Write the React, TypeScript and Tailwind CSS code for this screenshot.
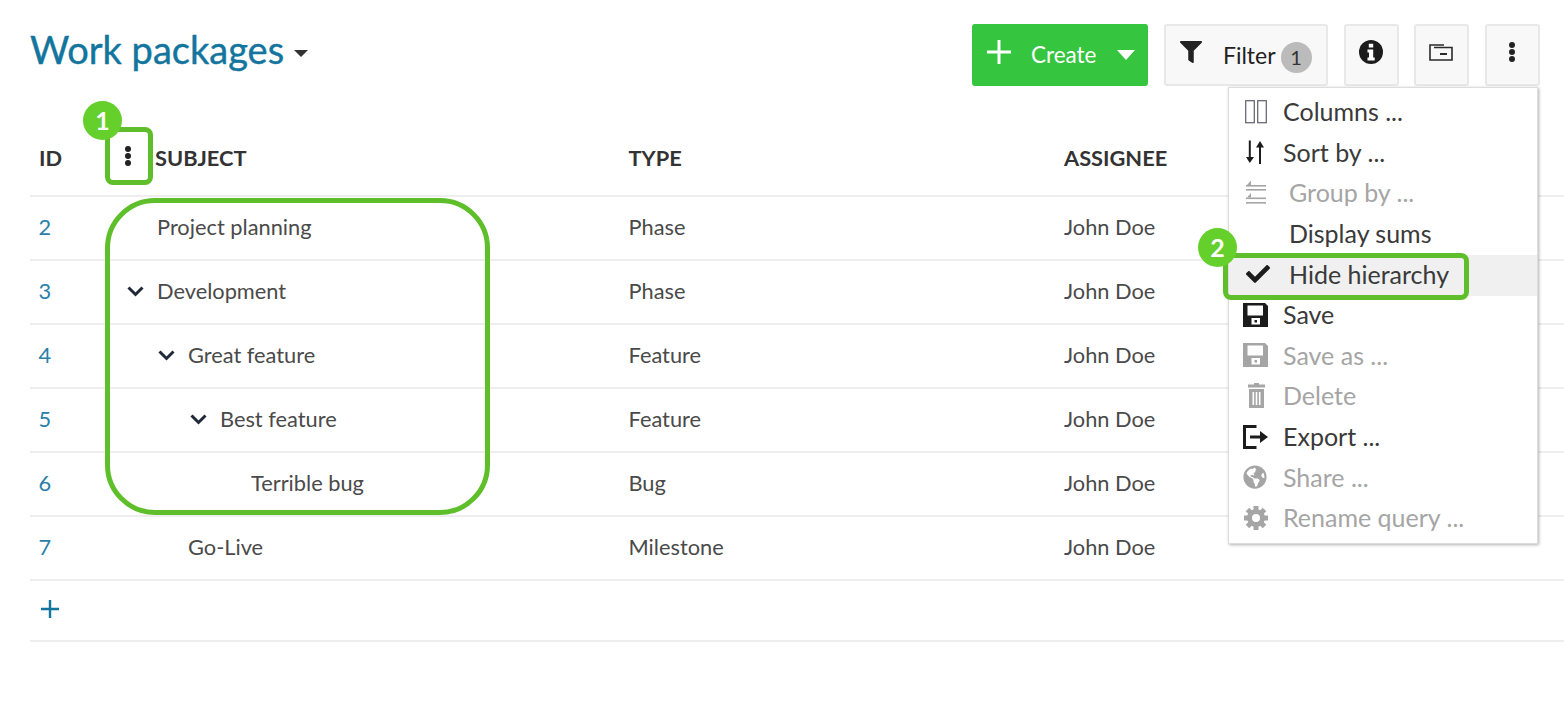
import React from 'react';
import { FaCheck, FaFilter, FaGlobeAmericas } from 'react-icons/fa';

const ColumnsIcon = () => (
  <svg width="22" height="24" viewBox="0 0 22 24" fill="none" stroke="#6b6b78" strokeWidth="1.3">
    <rect x="0.7" y="0.7" width="8.6" height="22" />
    <rect x="12.7" y="0.7" width="8.6" height="22" />
  </svg>
);

const SortIcon = () => (
  <svg width="22" height="24" viewBox="0 0 22 24" fill="currentColor">
    <rect x="3.8" y="0.5" width="2" height="18" />
    <path d="M1 17h8L4.8 23z" />
    <rect x="14" y="6" width="2" height="18" />
    <path d="M11 7.5h8L15 1z" />
  </svg>
);

const GroupIcon = () => (
  <svg width="22" height="25" viewBox="0 0 22 25" fill="currentColor">
    <path d="M6 0.5v4.5H2z" />
    <rect x="1" y="5" width="20" height="1.6" />
    <rect x="1" y="9" width="20" height="1.6" />
    <path d="M6 13v4.5H2z" />
    <rect x="1" y="17.5" width="20" height="1.6" />
    <rect x="1" y="22" width="20" height="1.6" />
  </svg>
);

const SaveIcon = () => (
  <svg width="25" height="24" viewBox="0 0 25 24" className="-ml-[2px]" fill="currentColor">
    <path
      fillRule="evenodd"
      d="M0 0h22l3 3v21H0zM4.500 2.500v10h15.500v-10zM8.500 15v6.500h8.500V15zM11.500 17h2.500v2.500h-2.500z"
    />
  </svg>
);

const TrashIcon = () => (
  <svg width="17" height="25" viewBox="0 0 17 25" className="ml-[3px]" fill="currentColor">
    <path d="M6 0h5v1.500h6v3H0v-3h6z" />
    <path fillRule="evenodd" d="M1 6h15v19H1zM4.500 9v13h1.600V9zM7.700 9v13h1.600V9zM10.900 9v13h1.600V9z" />
  </svg>
);

const ExportIcon = () => (
  <svg width="25" height="24" viewBox="0 0 25 24" className="-ml-[2px]" fill="none" stroke="currentColor">
    <path d="M13.500 1.500H1.500v21h12" strokeWidth="3" />
    <path d="M7 12h11" strokeWidth="3" />
    <path d="M17 6l8 6-8 6z" fill="currentColor" strokeWidth="0" />
  </svg>
);

const GearIcon = () => (
  <svg width="24" height="24" viewBox="0 0 24 24" className="-ml-[1px]" fill="currentColor">
    <circle cx="12" cy="12" r="6.500" fill="none" stroke="currentColor" strokeWidth="5" />
    {[0, 45, 90, 135, 180, 225, 270, 315].map((angle) => (
      <rect key={angle} x="9.500" y="0" width="5" height="6" transform={`rotate(${angle} 12 12)`} />
    ))}
  </svg>
);

const InfoIcon = () => (
  <svg width="24" height="24" viewBox="0 0 24 24">
    <circle cx="12" cy="12" r="12" fill="#1c1c1c" />
    <path d="M9.800 3.800h4.400v3.600H9.800zM8.500 9.500h5.700v8h1.500v3H8.500v-3H10v-5H8.500z" fill="#fff" />
  </svg>
);

const FolderIcon = () => (
  <svg width="24" height="17" viewBox="0 0 24 17" fill="none" stroke="#2a2a2a" strokeWidth="1.600">
    <path d="M15 1H1v15h22V3.500H5" />
    <path d="M11 10h7" strokeWidth="2" />
  </svg>
);

const Chevron = () => (
  <svg width="17" height="11" viewBox="0 0 17 11" fill="none" stroke="#1f2937" strokeWidth="3">
    <path d="M1.500 1.500 8.500 8.500 15.500 1.500" />
  </svg>
);

const Dots = () => (
  <span className="flex flex-col items-center gap-[1px]">
    <span className="w-[6px] h-[6px] rounded-full bg-[#222]" />
    <span className="w-[6px] h-[6px] rounded-full bg-[#222]" />
    <span className="w-[6px] h-[6px] rounded-full bg-[#222]" />
  </span>
);

const rows = [
  { id: 2, subject: 'Project planning', type: 'Phase', pad: 'pl-[32px]', toggle: false },
  { id: 3, subject: 'Development', type: 'Phase', pad: 'pl-0', toggle: true },
  { id: 4, subject: 'Great feature', type: 'Feature', pad: 'pl-[31px]', toggle: true },
  { id: 5, subject: 'Best feature', type: 'Feature', pad: 'pl-[63px]', toggle: true },
  { id: 6, subject: 'Terrible bug', type: 'Bug', pad: 'pl-[126px]', toggle: false },
  { id: 7, subject: 'Go-Live', type: 'Milestone', pad: 'pl-[63px]', toggle: false },
];

const menuItems = [
  { label: 'Columns ...', icon: <ColumnsIcon />, off: false, gap: 'w-[38px]' },
  { label: 'Sort by ...', icon: <SortIcon />, off: false, gap: 'w-[38px]' },
  { label: 'Group by ...', icon: <GroupIcon />, off: true, gap: 'w-[44px]' },
  { label: 'Display sums', icon: null, off: false, gap: 'w-[44px]' },
  { label: 'Hide hierarchy', icon: <FaCheck size={24} className="ml-[1px] mb-[1px]" />, off: false, gap: 'w-[44px]', active: true },
  { label: 'Save', icon: <SaveIcon />, off: false, gap: 'w-[38px]' },
  { label: 'Save as ...', icon: <SaveIcon />, off: true, gap: 'w-[38px]' },
  { label: 'Delete', icon: <TrashIcon />, off: true, gap: 'w-[38px]' },
  { label: 'Export ...', icon: <ExportIcon />, off: false, gap: 'w-[38px]' },
  { label: 'Share ...', icon: <FaGlobeAmericas size={24} className="-ml-[2px]" />, off: true, gap: 'w-[38px]' },
  { label: 'Rename query ...', icon: <GearIcon />, off: true, gap: 'w-[38px]' },
];

const ToolButton: React.FC<{ children: React.ReactNode; className?: string }> = ({ children, className }) => (
  <button className={`h-[62px] flex items-center justify-center bg-[#f8f8f8] border-2 border-[#e8e8e8] rounded-[3px] text-[#222] ${className ?? ''}`}>
    {children}
  </button>
);

const Badge: React.FC<{ n: number; className: string }> = ({ n, className }) => (
  <span className={`absolute w-[39px] h-[39px] rounded-full bg-[#65cf2c] text-white font-bold text-[25px] flex items-center justify-center ${className}`}>
    {n}
  </span>
);

export default function App() {
  return (
    <div className="relative w-[1564px] h-[719px] overflow-hidden bg-white font-['Lato',sans-serif] text-[#4a4a4a]">
      {/* Toolbar */}
      <div className="flex items-start justify-between pl-[30px] pr-[24px] pt-[24px] h-[120px]">
        <h1 className="flex items-center gap-[10px] h-[50px] text-[38px] leading-none font-normal text-[#13759e] [-webkit-text-stroke:0.4px_#13759e]">
          Work packages
          <span className="mt-[8px] w-0 h-0 border-x-[7.500px] border-x-transparent border-t-[7px] border-t-[#333]" />
        </h1>
        <div className="flex gap-[15.750px]">
          <button className="w-[176px] h-[62px] flex items-center pl-[13px] bg-[#35c53f] rounded-[3px] text-white text-[22.500px]">
            <svg width="28" height="28" viewBox="0 0 28 28" stroke="currentColor" strokeWidth="3" className="mb-[6px]">
              <path d="M14 2v24M2 14h24" />
            </svg>
            <span className="ml-[18px]">Create</span>
            <span className="ml-[20px] w-0 h-0 border-x-[9px] border-x-transparent border-t-[10px] border-t-white" />
          </button>
          <ToolButton className="w-[164px] text-[23px] text-[#4a4a4a]">
            <FaFilter size={22} className="text-[#222] mb-[6px]" />
            <span className="ml-[21px]">Filter</span>
            <span className="ml-[5px] mt-[4px] w-[31px] h-[31px] rounded-full bg-[#bbb] text-[#333] text-[20px] flex items-center justify-center">1</span>
          </ToolButton>
          <ToolButton className="w-[55px]">
            <span className="mb-[6px] mr-[1px]"><InfoIcon /></span>
          </ToolButton>
          <ToolButton className="w-[55px]">
            <span className="mb-[6px] mr-[1px]"><FolderIcon /></span>
          </ToolButton>
          <ToolButton className="w-[55px]">
            <span className="mb-[6px] mr-[2px]"><Dots /></span>
          </ToolButton>
        </div>
      </div>

      {/* Table */}
      <div className="ml-[30px] text-[21.800px]">
        <div className="grid grid-cols-[95px_503.500px_435.500px_1fr] h-[77px] items-center border-b-2 border-[#eee] font-bold text-[#333] pt-[2px]">
          <div className="pl-[9px]">ID</div>
          <div className="flex items-center">
            <span className="w-[6px] mr-[24px] mb-[5px] flex justify-center"><Dots /></span>
            SUBJECT
          </div>
          <div>TYPE</div>
          <div>ASSIGNEE</div>
        </div>
        {rows.map((row) => (
          <div key={row.id} className="grid grid-cols-[95px_503.500px_435.500px_1fr] h-[64px] items-center border-b-2 border-[#eee] pb-[2px]">
            <div className="pl-[8.500px] text-[#2a80a8]">{row.id}</div>
            <div className={`flex items-center ${row.pad}`}>
              {row.toggle && (
                <span className="w-[32px] pl-[3px] flex -translate-x-px"><Chevron /></span>
              )}
              {row.subject}
            </div>
            <div>{row.type}</div>
            <div>John Doe</div>
          </div>
        ))}
        <div className="h-[61px] flex items-center pl-[10px] pb-[4px] border-b-2 border-[#eee] text-[#13759e]">
          <svg width="20" height="20" viewBox="0 0 20 20" stroke="currentColor" strokeWidth="2.400">
            <path d="M10 1v18M1 10h18" />
          </svg>
        </div>
      </div>

      {/* Settings menu */}
      <div className="absolute left-[1228px] top-[87px] w-[310px] h-[457px] py-[5px] bg-white border border-[#ddd] shadow-[1px_1px_3px_rgba(0,0,0,0.3)] text-[25px] leading-none">
        {menuItems.map((item) => (
          <div
            key={item.label}
            className={`h-[40.600px] flex items-center pl-[16px] pb-[3px] ${item.active ? 'bg-[#f0f0f0]' : ''} ${item.off ? 'text-[#a5a5a5]' : 'text-[#3a3a3a]'}`}
          >
            <span className={`${item.gap} flex items-center shrink-0 ${item.off ? '' : 'text-[#1c1c1c]'}`}>{item.icon}</span>
            {item.label}
          </div>
        ))}
      </div>

      {/* Callouts */}
      <div className="absolute left-[105px] top-[127px] w-[48px] h-[58px] border-[5px] border-[#5fbf2b] rounded-[8px]" />
      <div className="absolute left-[105px] top-[198px] w-[385px] h-[317px] border-[5px] border-[#5fbf2b] rounded-[50px]" />
      <div className="absolute left-[1223px] top-[253px] w-[246px] h-[47px] border-[5px] border-[#5fbf2b] rounded-[8px]" />
      <Badge n={1} className="left-[83px] top-[101px]" />
      <Badge n={2} className="left-[1198px] top-[228px]" />
    </div>
  );
}
